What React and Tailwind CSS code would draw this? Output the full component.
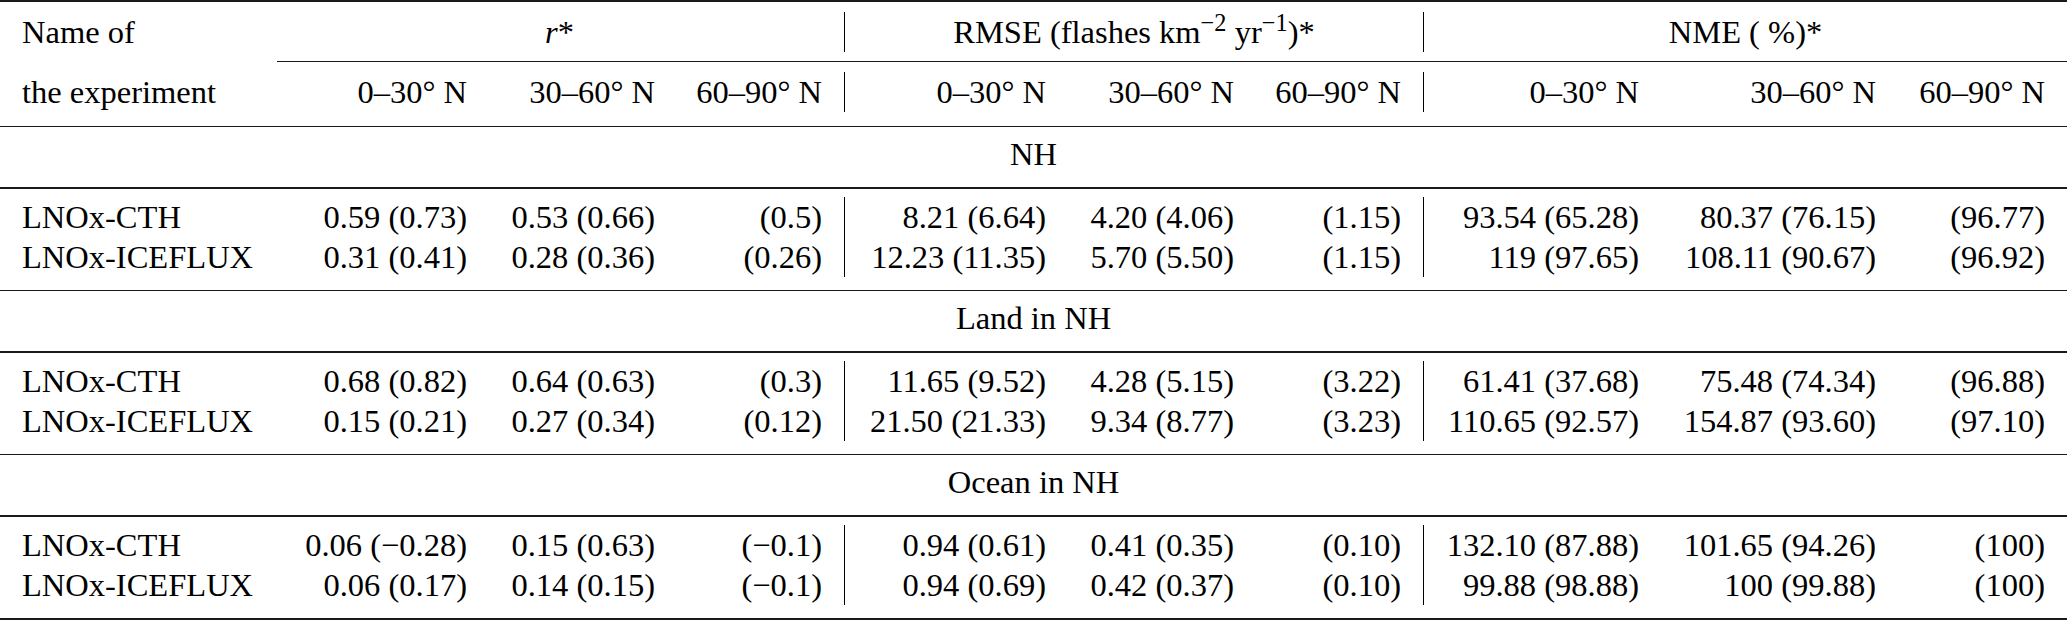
const grid =
  "grid grid-cols-[275px_214px_188px_168px_223px_188px_168px_237px_237px_169px]";

const sections = [
  {
    title: "NH",
    rows: [
      ["LNOx-CTH", "0.59 (0.73)", "0.53 (0.66)", "(0.5)", "8.21 (6.64)", "4.20 (4.06)", "(1.15)", "93.54 (65.28)", "80.37 (76.15)", "(96.77)"],
      ["LNOx-ICEFLUX", "0.31 (0.41)", "0.28 (0.36)", "(0.26)", "12.23 (11.35)", "5.70 (5.50)", "(1.15)", "119 (97.65)", "108.11 (90.67)", "(96.92)"],
    ],
  },
  {
    title: "Land in NH",
    rows: [
      ["LNOx-CTH", "0.68 (0.82)", "0.64 (0.63)", "(0.3)", "11.65 (9.52)", "4.28 (5.15)", "(3.22)", "61.41 (37.68)", "75.48 (74.34)", "(96.88)"],
      ["LNOx-ICEFLUX", "0.15 (0.21)", "0.27 (0.34)", "(0.12)", "21.50 (21.33)", "9.34 (8.77)", "(3.23)", "110.65 (92.57)", "154.87 (93.60)", "(97.10)"],
    ],
  },
  {
    title: "Ocean in NH",
    rows: [
      ["LNOx-CTH", "0.06 (−0.28)", "0.15 (0.63)", "(−0.1)", "0.94 (0.61)", "0.41 (0.35)", "(0.10)", "132.10 (87.88)", "101.65 (94.26)", "(100)"],
      ["LNOx-ICEFLUX", "0.06 (0.17)", "0.14 (0.15)", "(−0.1)", "0.94 (0.69)", "0.42 (0.37)", "(0.10)", "99.88 (98.88)", "100 (99.88)", "(100)"],
    ],
  },
];

const bands = ["0–30° N", "30–60° N", "60–90° N"];

// cells 3 and 6 carry the vertical separators
const Row = ({ cells }) => (
  <div className={grid}>
    {cells.map((c, i) =>
      i === 0 ? (
        <div key={i} className="pl-[22px] whitespace-nowrap">
          {c}
        </div>
      ) : (
        <div
          key={i}
          className={`pr-[22px] text-right whitespace-nowrap ${
            i === 3 || i === 6 ? "border-r border-black" : ""
          }`}
        >
          {c}
        </div>
      )
    )}
  </div>
);

const Midrule = () => <div className="h-[1.5px] bg-[#1a1a1a]" />;

export default function App() {
  return (
    <div className="w-[2067px] h-[620px] bg-white text-black [font-family:'Liberation_Serif','Times_New_Roman',serif] text-[32.5px] leading-[40px]">
      <div className="h-[2px] bg-[#1a1a1a]" />

      {/* header */}
      <div className={`${grid} mt-[10px]`}>
        <div className="pl-[22px]">Name of</div>
        <div className="col-span-3 text-center border-r border-black">
          <i>r</i>*
        </div>
        <div className="col-span-3 text-center border-r border-black">
          RMSE (flashes km<sup>−2</sup> yr<sup>−1</sup>)*
        </div>
        <div className="col-span-3 text-center">NME ( %)*</div>
      </div>
      <div className="mt-[8.5px] ml-[277px] h-[1px] bg-[#1a1a1a]" />
      <div className="mt-[10.5px]">
        <Row cells={["the experiment", ...bands, ...bands, ...bands]} />
      </div>
      <div className="mt-[13.5px]">
        <Midrule />
      </div>

      {sections.map((s, si) => (
        <div key={s.title}>
          <div className="pt-[7px] pb-[13px] text-center">{s.title}</div>
          <Midrule />
          <div className="pt-[8px] pb-[13px]">
            {s.rows.map((r, ri) => (
              <Row key={ri} cells={r} />
            ))}
          </div>
          {si < sections.length - 1 ? (
            <Midrule />
          ) : (
            <div className="h-[2px] bg-[#1a1a1a]" />
          )}
        </div>
      ))}
    </div>
  );
}
